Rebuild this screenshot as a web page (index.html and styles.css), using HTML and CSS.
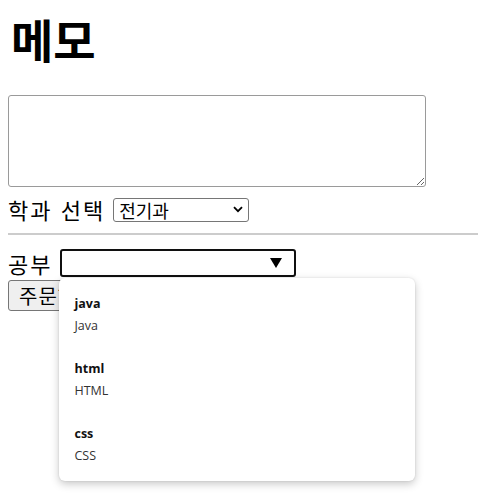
FILE: index.html
```html
<!DOCTYPE html>
<html lang="ko">
<head>
<meta charset="utf-8">
<title>메모</title>
<link rel="stylesheet" href="styles.css">
</head>
<body>
<h1 class="title">메모</h1>
<textarea class="memo"></textarea>
<div class="row dept">
  <span class="label">학과 선택</span>
  <div class="dept-select" role="combobox">
    <span class="dept-value">전기과</span>
    <svg class="chevron" width="10" height="7" viewBox="0 0 10 7"><path d="M1 1.2L5 5.2L9 1.2" fill="none" stroke="#000" stroke-width="1.8"/></svg>
  </div>
</div>
<div class="divider"></div>
<div class="row study">
  <span class="label">공부</span>
  <div class="combo">
    <div class="combo-box">
      <svg class="combo-arrow" width="12" height="10" viewBox="0 0 12 10"><path d="M0 0H12L6 10Z" fill="#000"/></svg>
    </div>
    <ul class="options">
      <li class="option"><b class="opt-key">java</b><span class="opt-val">Java</span></li>
      <li class="option"><b class="opt-key">html</b><span class="opt-val">HTML</span></li>
      <li class="option"><b class="opt-key">css</b><span class="opt-val">CSS</span></li>
    </ul>
  </div>
</div>
<button class="order">주문하기</button>
</body>
</html>
```
FILE: styles.css
```css
html {
  height: 100%;
}
body {
  margin: 0;
  padding: 8px;
  box-sizing: border-box;
  min-height: 503px;
  font-family: "Noto Sans CJK KR", "Noto Sans", sans-serif;
  font-size: 22px;
  color: #000;
  background: #fff;
}
.title {
  font-size: 46px;
  line-height: 60px;
  margin: 0 0 27px;
  padding-left: 3px;
  font-weight: 700;
}
.memo {
  display: block;
  box-sizing: border-box;
  width: 418px;
  height: 92px;
  margin: 0;
  border: 1px solid #9a9a9a;
  border-radius: 3px;
}
.row {
  display: flex;
  align-items: center;
}
.dept {
  margin-top: 10px;
  height: 25px;
  gap: 8px;
}
.label {
  line-height: 25px;
  letter-spacing: 2px;
}
.dept-select {
  box-sizing: border-box;
  width: 136px;
  height: 24px;
  border: 1px solid #767676;
  border-radius: 3px;
  background: #fff;
  display: flex;
  align-items: center;
  justify-content: space-between;
  padding: 0 5px 0 5px;
}
.dept-value {
  font-size: 18px;
  line-height: 22px;
}
.divider {
  height: 2px;
  background: #cccccc;
  margin: 11px -8px 0 0;
}
.study {
  margin-top: 14px;
  height: 28px;
  gap: 8px;
}
.combo {
  position: relative;
}
.combo-box {
  box-sizing: border-box;
  width: 236px;
  height: 28px;
  border: 2px solid #101010;
  border-radius: 3px;
  display: flex;
  align-items: center;
  justify-content: flex-end;
  padding-right: 12px;
  background: #fff;
}
.options {
  position: absolute;
  top: 29px;
  left: -1px;
  width: 356px;
  margin: 0;
  padding: 4px 0;
  list-style: none;
  background: #fff;
  border-radius: 6px;
  box-shadow: 0 3px 8px rgba(0,0,0,0.22), 0 0 2px rgba(0,0,0,0.12);
  font-family: "Open Sans", "Noto Sans", sans-serif;
  font-size: 12.5px;
  letter-spacing: 0;
  z-index: 2;
}
.option {
  display: flex;
  flex-direction: column;
  padding: 11px 15px;
  line-height: 21.5px;
}
.opt-key {
  font-weight: 700;
  color: #111;
}
.opt-val {
  color: #333;
}
.order {
  margin-top: 3px;
  height: 31px;
  padding: 0 10px;
  font-family: inherit;
  font-size: 20px;
  letter-spacing: 1px;
  background: #efefef;
  border: 1px solid #767676;
  border-radius: 3px;
  color: #000;
}
```
